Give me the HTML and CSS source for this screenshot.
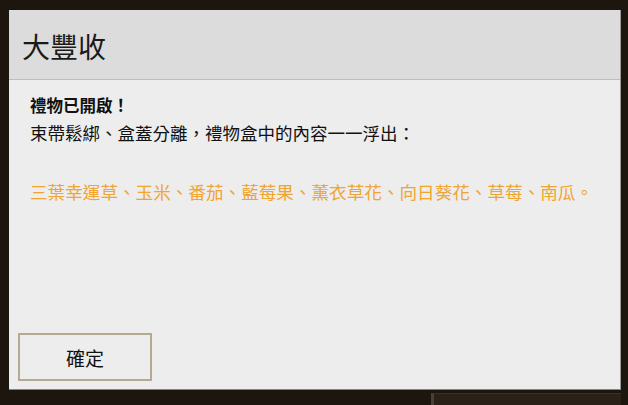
FILE: index.html
```html
<!DOCTYPE html>
<html lang="zh-Hant">
<head>
    <meta charset="UTF-8">
    <meta name="viewport" content="width=device-width, initial-scale=1.0">
    <title>大豐收</title>
    <link rel="stylesheet" href="styles.css">
</head>
<body>
    <div class="dialog">
        <div class="dialog-header">
            <h1>大豐收</h1>
        </div>
        <div class="dialog-body">
            <p class="lead">禮物已開啟！</p>
            <p>束帶鬆綁、盒蓋分離，禮物盒中的內容一一浮出：</p>
            <p class="items">三葉幸運草、玉米、番茄、藍莓果、薰衣草花、向日葵花、草莓、南瓜。</p>
        </div>
        <div class="dialog-footer">
            <button type="button">確定</button>
        </div>
    </div>
    <div class="below">
        <div class="panel"></div>
    </div>
</body>
</html>
```

FILE: styles.css
```css
body {
    font-family: 'Noto Sans CJK TC', 'Noto Sans', sans-serif;
    background-color: #1c160f;
    margin: 0;
    padding: 10px 7px 0 9px;
    height: 405px;
    box-sizing: border-box;
    overflow: hidden;
}
.dialog {
    width: 612px;
    height: 380px;
    box-sizing: border-box;
    background: #ededed;
    border-right: 1px solid #9a9a9a;
    border-bottom: 1px solid #8a8478;
    display: flex;
    flex-direction: column;
}
.dialog-header {
    height: 70px;
    box-sizing: border-box;
    background: #dcdcdc;
    border-bottom: 1px solid #bdbdbd;
    display: flex;
    align-items: center;
    padding-left: 13px;
}
h1 {
    margin: 0;
    font-size: 28px;
    font-weight: 400;
    color: #1a1a1a;
    line-height: 1;
    padding-top: 2px;
}
.dialog-body {
    padding: 12px 21px 0;
    color: #111;
    font-size: 17.5px;
}
.dialog-body p {
    margin: 0;
    line-height: 27px;
}
.dialog-body .lead {
    font-weight: 700;
    font-size: 16.5px;
}
.dialog-body .items {
    margin-top: 32px;
    color: #f0a431;
    font-size: 17.6px;
}
.dialog-footer {
    margin-top: auto;
    padding: 0 0 8px 9px;
}
button {
    width: 134px;
    height: 48px;
    background: #ededed;
    border: 2px solid #b3aa90;
    font-family: inherit;
    font-size: 19px;
    color: #111;
    padding: 0;
}
.below {
    display: flex;
    justify-content: flex-end;
    padding-top: 3px;
}
.panel {
    width: 187px;
    height: 20px;
    background: #2a2119;
    border-left: 3px solid #4a4038;
    border-top: 1px solid #3a3028;
}
```
